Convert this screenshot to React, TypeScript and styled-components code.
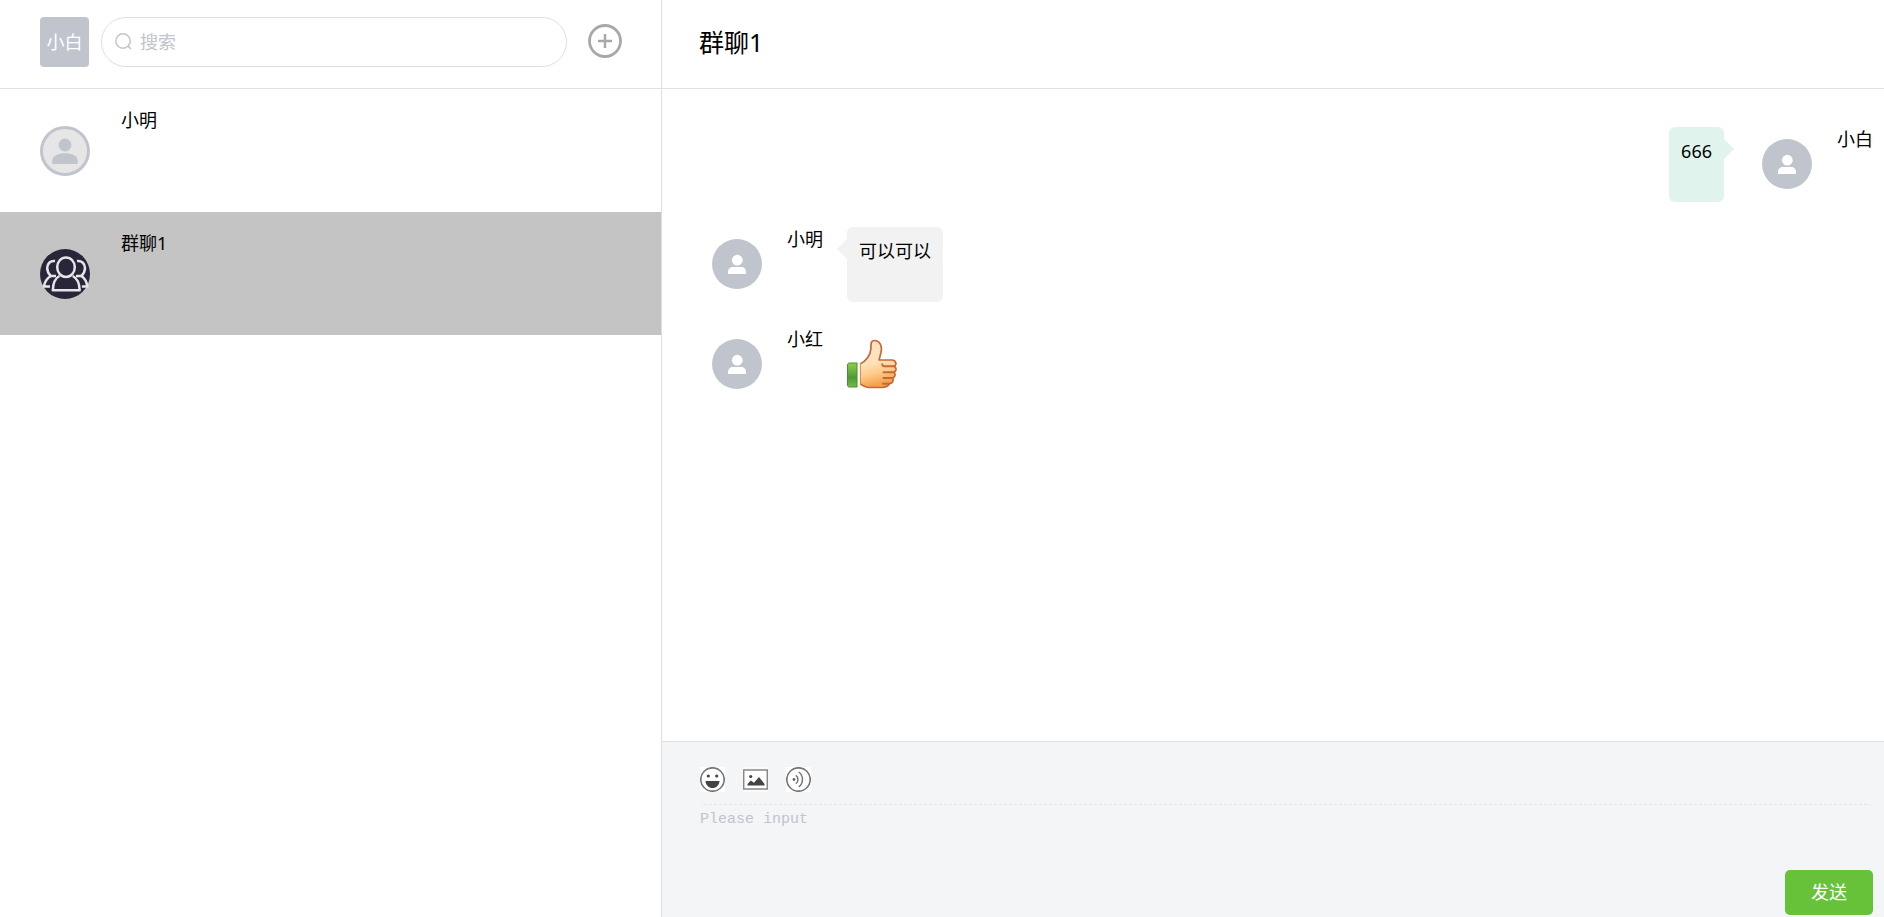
import React, { useState } from 'react';
import styled, { createGlobalStyle } from 'styled-components';

const GlobalStyle = createGlobalStyle`
  *, *::before, *::after { box-sizing: border-box; }
  body {
    margin: 0;
    background: #fff;
    color: #000;
    font-family: "Noto Sans", "Noto Sans CJK SC", sans-serif;
    font-size: 18px;
    font-weight: 400;
    line-height: 24px;
  }
  button, input, textarea { font: inherit; color: inherit; }
`;

const Page = styled.div`
  display: grid;
  grid-template-columns: 13fr 24fr;
  min-height: 100vh;
`;

const Sidebar = styled.aside`
  border-right: 1px solid #dcdfe2;
`;

const SidebarHeader = styled.header`
  display: flex;
  align-items: center;
  height: 89px;
  padding: 0 38px 4px 40px;
  border-bottom: 1px solid #e0e0e0;
`;

const OwnAvatar = styled.div`
  display: grid;
  place-items: center;
  flex: none;
  width: 49px;
  height: 50px;
  margin-right: 12px;
  border-radius: 4px;
  background: #c0c4cc;
  color: #fff;
`;

const SearchBox = styled.label`
  display: flex;
  flex: 1;
  align-items: center;
  gap: 7px;
  height: 50px;
  padding: 0 13px;
  border: 1px solid #dcdfe6;
  border-radius: 25px;
`;

const SearchInput = styled.input`
  flex: 1;
  min-width: 0;
  padding: 0;
  border: 0;
  outline: 0;
  background: none;
  &::placeholder { color: #c0c4cc; opacity: 1; }
`;

const IconButton = styled.button`
  display: block;
  flex: none;
  padding: 0;
  border: 0;
  background: none;
  cursor: pointer;
  svg { display: block; }
`;

const AddButton = styled(IconButton)`
  margin: 0 0 2px 20px;
`;

const List = styled.ul`
  margin: 0;
  padding: 0;
  list-style: none;
`;

const Contact = styled.button<{ $active: boolean }>`
  display: flex;
  align-items: flex-start;
  gap: 31px;
  width: 100%;
  height: 123px;
  padding: 19px 40px;
  border: 0;
  background: ${(p) => (p.$active ? '#c4c4c4' : 'transparent')};
  text-align: left;
  cursor: pointer;
  svg { display: block; flex: none; align-self: center; }
`;

const Chat = styled.main`
  display: flex;
  flex-direction: column;
  min-width: 0;
`;

const ChatHeader = styled.header`
  display: flex;
  align-items: center;
  height: 89px;
  padding: 0 37px 4px;
  border-bottom: 1px solid #e0e0e0;
`;

const Title = styled.h1`
  margin: 0;
  font-size: 25px;
  font-weight: 400;
  line-height: 32px;
`;

const Messages = styled.div`
  display: flex;
  flex: 1;
  flex-direction: column;
  gap: 25px;
  padding: 38px 11px 38px 50px;
`;

const Message = styled.article<{ $own?: boolean }>`
  display: flex;
  align-items: flex-start;
  gap: 24px;
  height: 75px;
  justify-content: ${(p) => (p.$own ? 'flex-end' : 'flex-start')};
`;

const Avatar = styled.span`
  flex: none;
  width: 50px;
  height: 50px;
  margin-top: 12px;
  svg { display: block; }
`;

const Name = styled.span`
  margin-left: 1px;
`;

const Bubble = styled.div<{ $own?: boolean }>`
  position: relative;
  height: 75px;
  margin-right: ${(p) => (p.$own ? '14px' : '0')};
  padding: 12px;
  border-radius: 6px;
  background: ${(p) => (p.$own ? '#e0f4ed' : '#f2f2f2')};

  &::after {
    content: "";
    position: absolute;
    top: 12px;
    ${(p) => (p.$own ? 'left: 100%;' : 'right: 100%;')}
    border: 10px solid transparent;
    ${(p) =>
      p.$own
        ? 'border-right-width: 0; border-left-color: #e0f4ed;'
        : 'border-left-width: 0; border-right-color: #f2f2f2;'}
  }
`;

const Composer = styled.form`
  display: flex;
  flex-direction: column;
  padding: 25px 11px 2px 37px;
  border-top: 1px solid #dcdfe2;
  background: #f4f5f7;
`;

const Tools = styled.div`
  display: flex;
  gap: 18px;
  margin: 0 0 12px 1px;
`;

const Draft = styled.textarea`
  height: 66px;
  padding: 4px 0;
  border: 1px dashed transparent;
  border-top-color: #e4e4e6;
  border-radius: 5px;
  outline: 0;
  background: none;
  resize: none;
  font-family: "Liberation Mono", monospace;
  font-size: 15px;
  line-height: 22px;
  &::placeholder { color: #c0c4cc; opacity: 1; }
`;

const SendButton = styled.button`
  align-self: flex-end;
  width: 88px;
  height: 45px;
  padding: 0 0 2px;
  border: 0;
  border-radius: 5px;
  background: #67c23a;
  color: #fff;
  cursor: pointer;
`;

const SearchIcon = () => (
  <svg width="18" height="18" viewBox="0 0 18 18" fill="none" stroke="#c0c4cc" strokeWidth="1.5" aria-hidden="true">
    <circle cx="8" cy="8" r="7.2" />
    <path d="M13.1 13.1 16 16" />
  </svg>
);

const PlusIcon = () => (
  <svg width="36" height="36" viewBox="0 0 36 36" fill="none" stroke="#a8a8a8" aria-hidden="true">
    <circle cx="18" cy="18" r="15.5" strokeWidth="2.8" />
    <path d="M11 18h14M18 11v14" strokeWidth="2.5" />
  </svg>
);

const OutlinedPerson = () => (
  <svg width="50" height="50" viewBox="0 0 50 50" aria-hidden="true">
    <circle cx="25" cy="25" r="23.5" fill="#e6e6e6" stroke="#c0c4cc" strokeWidth="3" />
    <circle cx="25" cy="19" r="6.4" fill="#c0c4cc" />
    <path d="M12.3 38v-3.8c0-4.6 6.4-7 12.7-7s12.7 2.4 12.7 7V38Z" fill="#c0c4cc" />
  </svg>
);

const GroupIcon = () => (
  <svg width="50" height="50" viewBox="0 0 50 50" aria-hidden="true">
    <circle cx="25" cy="25" r="25" fill="#282638" />
    <g fill="none" stroke="#e6e6ea" strokeWidth="2.5" strokeLinejoin="round">
      <path d="M15 12C10 11.5 7.2 14.8 7.2 19c0 3.800 1.600 6 3.600 8C6.800 29.400 4.600 33.500 4 37.500h6" />
      <path d="M37 12c5-.5 8 2.800 8 7 0 3.800-1.600 6-3.600 8 3.800 2.400 5.400 6.500 6 10.500h-5.500" />
      <path d="M10.500 27h5.500M41.500 27H36" />
      <ellipse cx="26" cy="18.200" rx="8.800" ry="9.800" />
      <path d="M19.500 27c-4 2-6.400 7-6.700 14.200h26.900c-.3-7.200-3-12.200-7-14.200" />
    </g>
  </svg>
);

const PersonIcon = () => (
  <svg width="50" height="50" viewBox="0 0 50 50" aria-hidden="true">
    <circle cx="25" cy="25" r="25" fill="#c0c4cc" />
    <circle cx="25.300" cy="21.200" r="5.400" fill="#fff" />
    <path d="M16 35v-2c0-3 2-5 5-5h8c3 0 5 2 5 5v2Z" fill="#fff" />
  </svg>
);

const ThumbIcon = () => (
  <svg width="50" height="50" viewBox="0 0 50 50" role="img" aria-label="点赞">
    <defs>
      <linearGradient id="skin" x1="0" y1="0" x2="0.2" y2="1">
        <stop offset="0" stopColor="#fbe0c0" />
        <stop offset="0.500" stopColor="#ffe3bc" />
        <stop offset="0.750" stopColor="#fdcb8c" />
        <stop offset="1" stopColor="#f5a04a" />
      </linearGradient>
      <linearGradient id="cuff" x1="0" y1="0" x2="0" y2="1">
        <stop offset="0" stopColor="#8ed044" />
        <stop offset="0.600" stopColor="#4f9a37" />
        <stop offset="1" stopColor="#72bb48" />
      </linearGradient>
    </defs>
    <path
      d="M13 25c6-2.500 10.500-9.500 10.800-14.500C24 5 23.500 1.500 27.500 1.500c5 0 7.500 5 6.800 10-.4 3.300-1.500 6-2.200 9.500H45c4 0 5 4.500 2.500 6.300 2.200 1.700 2 4.800-.5 6 1.700 2 1.300 4.700-1.200 5.700 1 3.200-.6 5.500-3.500 5.700-1.200 2.800-3.500 3.800-7.300 3.800H22c-4.500 0-6-2.500-9-3.500Z"
      fill="url(#skin)"
      stroke="#c4693a"
      strokeWidth="1.700"
      strokeLinejoin="round"
    />
    <path d="M47.500 27.300H37.500c-1.500 0-2.300-.7-2.300-2M47 33.300H36.500M45.800 39H36.500M42.300 44.700H36" fill="none" stroke="#c4693a" strokeWidth="1.900" strokeLinecap="round" />
    <rect x="9.500" y="24" width="3.500" height="24" fill="#fffaf0" stroke="#d9d9b8" strokeWidth="0.500" />
    <path d="M2.500 24H10v24H2.500C1 48 .5 47 .5 46V26c0-1.300.8-2 2-2Z" fill="url(#cuff)" stroke="#45912f" />
  </svg>
);

const SmileIcon = () => (
  <svg width="25" height="25" viewBox="0 0 25 25" aria-hidden="true">
    <path d="M0 0h25v25H0Z" fill="#fff" />
    <circle cx="12.500" cy="12.500" r="11.700" fill="none" stroke="#777" strokeWidth="1.700" />
    <circle cx="8.300" cy="9" r="1.600" fill="#444" />
    <circle cx="16.700" cy="9" r="1.600" fill="#444" />
    <path d="M5.500 14h14c-.3 4.300-3.200 7-7 7s-6.700-2.700-7-7Z" fill="#444" />
  </svg>
);

const PictureIcon = () => (
  <svg width="25" height="25" viewBox="0 0 25 25" aria-hidden="true">
    <path d="M0 0h25v25H0Z" fill="#fafafa" />
    <rect x="0.700" y="3" width="23.600" height="19" fill="#fff" stroke="#888" strokeWidth="1.500" />
    <circle cx="7.700" cy="9.500" r="1.600" fill="#444" />
    <path d="M4.500 18.500v-1.500l3.300-3.500 3.200 2.200 5-5.700 5.500 7v1.500Z" fill="#444" />
  </svg>
);

const VoiceIcon = () => (
  <svg width="25" height="25" viewBox="0 0 25 25" aria-hidden="true">
    <path d="M0 0h25v25H0Z" fill="#fff" />
    <g fill="none" stroke="#777" strokeWidth="1.700">
      <circle cx="12.500" cy="12.500" r="11.700" />
      <path d="M9.800 8.300c2.900 2 2.900 6.400 0 8.400M12.700 5c5 3.600 5 11.400 0 15" strokeWidth="1.500" />
    </g>
    <circle cx="8" cy="12.500" r="1.400" fill="#666" />
  </svg>
);

const contacts = [
  { name: '小明', icon: <OutlinedPerson /> },
  { name: '群聊1', icon: <GroupIcon /> },
];

export default function App() {
  const [selected, setSelected] = useState('群聊1');
  return (
    <>
      <GlobalStyle />
      <Page>
        <Sidebar>
          <SidebarHeader>
            <OwnAvatar>小白</OwnAvatar>
            <SearchBox>
              <SearchIcon />
              <SearchInput type="text" placeholder="搜索" aria-label="搜索" />
            </SearchBox>
            <AddButton type="button" aria-label="添加"><PlusIcon /></AddButton>
          </SidebarHeader>
          <List>
            {contacts.map(({ name, icon }) => (
              <li key={name}>
                <Contact type="button" $active={name === selected} onClick={() => setSelected(name)}>
                  {icon}
                  <span>{name}</span>
                </Contact>
              </li>
            ))}
          </List>
        </Sidebar>
        <Chat>
          <ChatHeader><Title>{selected}</Title></ChatHeader>
          <Messages>
            <Message $own>
              <Bubble $own>666</Bubble>
              <Avatar><PersonIcon /></Avatar>
              <Name>小白</Name>
            </Message>
            <Message>
              <Avatar><PersonIcon /></Avatar>
              <Name>小明</Name>
              <Bubble>可以可以</Bubble>
            </Message>
            <Message>
              <Avatar><PersonIcon /></Avatar>
              <Name>小红</Name>
              <Avatar><ThumbIcon /></Avatar>
            </Message>
          </Messages>
          <Composer onSubmit={(e) => e.preventDefault()}>
            <Tools>
              <IconButton type="button" aria-label="表情"><SmileIcon /></IconButton>
              <IconButton type="button" aria-label="图片"><PictureIcon /></IconButton>
              <IconButton type="button" aria-label="语音"><VoiceIcon /></IconButton>
            </Tools>
            <Draft placeholder="Please input" aria-label="消息" />
            <SendButton type="submit">发送</SendButton>
          </Composer>
        </Chat>
      </Page>
    </>
  );
}
